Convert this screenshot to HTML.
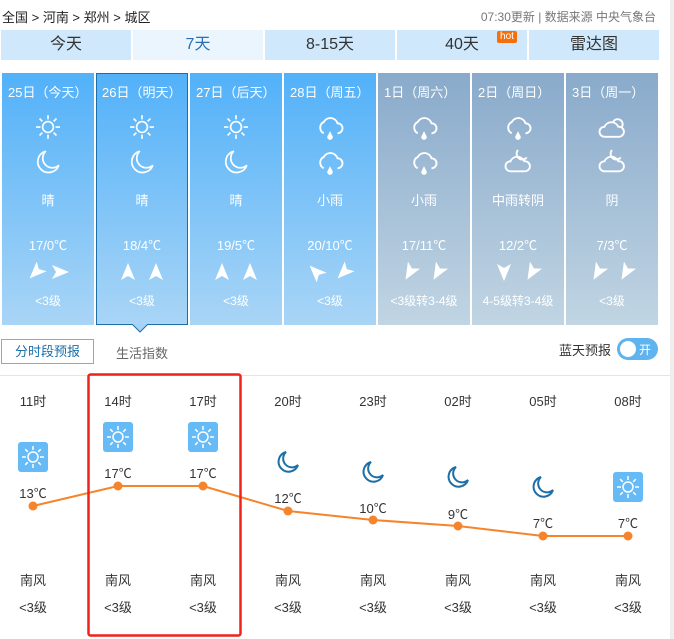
<!DOCTYPE html>
<html><head><meta charset="utf-8"><style>
*{margin:0;padding:0;box-sizing:border-box}
body{width:674px;height:639px;background:#fff;font-family:"Liberation Sans","Noto Sans CJK SC",sans-serif;position:relative;overflow:hidden;color:#333}
.a{position:absolute}
.tab{position:absolute;top:30px;height:30px;width:130px;background:#cfe8fc;font-size:16px;color:#333;text-align:center;line-height:30px}
.card{position:absolute;top:73px;height:252px;width:92px;color:#fff;text-align:center;background:linear-gradient(#52b1f9,#a9d5f6)}
.card.g{background:linear-gradient(#89aacb,#c1d5e3)}
.card .d{position:absolute;top:9px;left:6px;font-size:13px;text-align:left;white-space:nowrap}
.card svg{position:absolute;left:50%;transform:translateX(-50%)}
.card .t{position:absolute;width:100%;font-size:13px}
.c{position:absolute;text-align:center;width:60px;margin-left:-30px;font-size:13px;color:#333}
.sq{position:absolute;width:30px;height:30px;margin-left:-15px;background:#66bbf6;border-radius:3px}
</style></head><body>
<svg width="0" height="0" style="position:absolute">
<defs>
<g id="sun" fill="none" stroke="#fff" stroke-width="1.5"><circle cx="12" cy="12" r="5"/><path d="M12 1v4M12 19v4M1 12h4M19 12h4M4.2 4.2l2.6 2.6M17.2 17.2l2.6 2.6M4.2 19.8l2.6-2.6M17.2 6.8l2.6-2.6"/></g>
<g id="moon" fill="none" stroke="#fff" stroke-width="1.6"><path d="M10 2A10 10 0 1 0 22 15 8 8 0 0 1 10 2z"/></g>
<g id="rain" fill="none" stroke="#fff" stroke-width="1.5"><path d="M7 17a5 5 0 0 1 0-9 6 6 0 0 1 11 1 4 4 0 0 1 0 8"/><path d="M12 17l-1.5 3a1.5 1.5 0 0 0 3 0z" fill="#fff"/></g>
<g id="cloud" fill="none" stroke="#fff" stroke-width="1.5"><path d="M6 19a4 4 0 0 1 0-8 6 6 0 0 1 11 0 4 4 0 0 1 1 8z"/><path d="M13 7a4 4 0 0 1 7 4"/></g>
<g id="cm" fill="none" stroke="#fff" stroke-width="1.5"><path d="M6 21a4 4 0 0 1 0-8 6 6 0 0 1 11 0 4 4 0 0 1 1 8z"/><path d="M12 4a4 4 0 0 0 7 6 4 4 0 0 1-7-6z"/></g>
<g id="arr" fill="#fff"><path d="M0 -9L7 8 0 4-7 8z"/></g>
</defs></svg>

<div class="a" style="left:2px;top:7px;font-size:13px;color:#222">全国 &gt; 河南 &gt; 郑州 &gt; 城区</div>
<div class="a" style="right:18px;top:8px;font-size:12px;color:#777">07:30更新 | 数据来源 中央气象台</div>

<div class="tab" style="left:1px">今天</div>
<div class="tab" style="left:133px;background:#eaf5fe;color:#2a6fb6">7天</div>
<div class="tab" style="left:265px">8-15天</div>
<div class="tab" style="left:397px">40天</div>
<div class="a" style="left:497px;top:31px;width:20px;height:12px;background:#f56f0b;color:#fff;font-size:10px;line-height:12px;text-align:center;border-radius:2px">hot</div>
<div class="tab" style="left:529px">雷达图</div>

<div class="a" style="left:670px;top:0;width:4px;height:639px;background:#eee"></div>

<div class="card" style="left:2px"><div class="d">25日（今天）</div>
<svg width="26" height="26" viewBox="0 0 24 24" style="top:41px"><use href="#sun"/></svg>
<svg width="26" height="26" viewBox="0 0 24 24" style="top:76px"><use href="#moon"/></svg>
<div class="t" style="top:117px">晴</div><div class="t" style="top:162px">17/0℃</div>
<svg width="60" height="20" viewBox="0 0 60 20" style="top:189px"><use href="#arr" transform="translate(18 10) rotate(-135)"/><use href="#arr" transform="translate(42 10) rotate(90)"/></svg>
<div class="t" style="top:219px;font-size:12px">&lt;3级</div></div>

<div class="card" style="left:96px;border:1px solid #1b6fa8"><div class="d" style="left:5px;top:8px">26日（明天）</div>
<svg width="26" height="26" viewBox="0 0 24 24" style="top:40px"><use href="#sun"/></svg>
<svg width="26" height="26" viewBox="0 0 24 24" style="top:75px"><use href="#moon"/></svg>
<div class="t" style="top:116px">晴</div><div class="t" style="top:161px">18/4℃</div>
<svg width="60" height="20" viewBox="0 0 60 20" style="top:188px"><use href="#arr" transform="translate(16 10)"/><use href="#arr" transform="translate(44 10)"/></svg>
<div class="t" style="top:218px;font-size:12px">&lt;3级</div></div>
<svg class="a" style="left:132px;top:324px" width="16" height="9" viewBox="0 0 16 9"><path d="M0 0L8 8 16 0" fill="#a6d3f6" stroke="#1b6fa8"/></svg>

<div class="card" style="left:190px"><div class="d">27日（后天）</div>
<svg width="26" height="26" viewBox="0 0 24 24" style="top:41px"><use href="#sun"/></svg>
<svg width="26" height="26" viewBox="0 0 24 24" style="top:76px"><use href="#moon"/></svg>
<div class="t" style="top:117px">晴</div><div class="t" style="top:162px">19/5℃</div>
<svg width="60" height="20" viewBox="0 0 60 20" style="top:189px"><use href="#arr" transform="translate(16 10)"/><use href="#arr" transform="translate(44 10)"/></svg>
<div class="t" style="top:219px;font-size:12px">&lt;3级</div></div>

<div class="card" style="left:284px"><div class="d">28日（周五）</div>
<svg width="30" height="30" viewBox="0 0 24 24" style="top:39px"><use href="#rain"/></svg>
<svg width="30" height="30" viewBox="0 0 24 24" style="top:74px"><use href="#rain"/></svg>
<div class="t" style="top:117px">小雨</div><div class="t" style="top:162px">20/10℃</div>
<svg width="60" height="20" viewBox="0 0 60 20" style="top:189px"><use href="#arr" transform="translate(16 10) rotate(-45)"/><use href="#arr" transform="translate(44 10) rotate(-135)"/></svg>
<div class="t" style="top:219px;font-size:12px">&lt;3级</div></div>

<div class="card g" style="left:378px"><div class="d">1日（周六）</div>
<svg width="30" height="30" viewBox="0 0 24 24" style="top:39px"><use href="#rain"/></svg>
<svg width="30" height="30" viewBox="0 0 24 24" style="top:74px"><use href="#rain"/></svg>
<div class="t" style="top:117px">小雨</div><div class="t" style="top:162px">17/11℃</div>
<svg width="60" height="20" viewBox="0 0 60 20" style="top:189px"><use href="#arr" transform="translate(16 10) rotate(-150)"/><use href="#arr" transform="translate(44 10) rotate(-150)"/></svg>
<div class="t" style="top:219px;font-size:12px">&lt;3级转3-4级</div></div>

<div class="card g" style="left:472px"><div class="d">2日（周日）</div>
<svg width="30" height="30" viewBox="0 0 24 24" style="top:39px"><use href="#rain"/></svg>
<svg width="30" height="30" viewBox="0 0 24 24" style="top:72px"><use href="#cm"/></svg>
<div class="t" style="top:117px">中雨转阴</div><div class="t" style="top:162px">12/2℃</div>
<svg width="60" height="20" viewBox="0 0 60 20" style="top:189px"><use href="#arr" transform="translate(16 10) rotate(180)"/><use href="#arr" transform="translate(44 10) rotate(-150)"/></svg>
<div class="t" style="top:219px;font-size:12px">4-5级转3-4级</div></div>

<div class="card g" style="left:566px"><div class="d">3日（周一）</div>
<svg width="30" height="30" viewBox="0 0 24 24" style="top:40px"><use href="#cloud"/></svg>
<svg width="30" height="30" viewBox="0 0 24 24" style="top:72px"><use href="#cm"/></svg>
<div class="t" style="top:117px">阴</div><div class="t" style="top:162px">7/3℃</div>
<svg width="60" height="20" viewBox="0 0 60 20" style="top:189px"><use href="#arr" transform="translate(16 10) rotate(-150)"/><use href="#arr" transform="translate(44 10) rotate(-150)"/></svg>
<div class="t" style="top:219px;font-size:12px">&lt;3级</div></div>

<div class="a" style="left:1px;top:339px;width:93px;height:25px;border:1px solid #76b1d9;color:#1a6fa8;font-size:13px;text-align:center;line-height:23px">分时段预报</div>
<div class="a" style="left:116px;top:343px;font-size:13px;color:#666">生活指数</div>
<div class="a" style="left:559px;top:340px;font-size:13px;color:#333">蓝天预报</div>
<div class="a" style="left:617px;top:338px;width:41px;height:22px;border-radius:11px;background:#5fb3ee"><div class="a" style="left:3px;top:3px;width:16px;height:16px;border-radius:8px;background:#fff"></div><div class="a" style="left:22px;top:3px;color:#fff;font-size:12px">开</div></div>
<div class="a" style="left:0;top:375px;width:670px;height:1px;background:#e5e5e5"></div>

<svg class="a" style="left:0;top:0" width="670" height="639">
<polyline points="33,506 118,486 203,486 288,511 373,520 458,526 543,536 628,536" fill="none" stroke="#f5842b" stroke-width="2"/>
<g fill="#f5842b"><circle cx="33" cy="506" r="4.5"/><circle cx="118" cy="486" r="4.5"/><circle cx="203" cy="486" r="4.5"/><circle cx="288" cy="511" r="4.5"/><circle cx="373" cy="520" r="4.5"/><circle cx="458" cy="526" r="4.5"/><circle cx="543" cy="536" r="4.5"/><circle cx="628" cy="536" r="4.5"/></g>
<rect x="88.5" y="374.5" width="152" height="261" fill="none" stroke="#f0221b" stroke-width="2.5" rx="2"/>
<defs><g id="bm" fill="none" stroke="#1d6fa5" stroke-width="2"><path d="M10 2A10 10 0 1 0 22 15 8 8 0 0 1 10 2z"/></g></defs>
<use href="#bm" transform="translate(276 450)"/>
<use href="#bm" transform="translate(361 460)"/>
<use href="#bm" transform="translate(446 465)"/>
<use href="#bm" transform="translate(531 475)"/>
</svg>

<div class="sq" style="left:33px;top:442px"><svg width="30" height="30" viewBox="-3 -3 30 30"><use href="#sun"/></svg></div>
<div class="sq" style="left:118px;top:422px"><svg width="30" height="30" viewBox="-3 -3 30 30"><use href="#sun"/></svg></div>
<div class="sq" style="left:203px;top:422px"><svg width="30" height="30" viewBox="-3 -3 30 30"><use href="#sun"/></svg></div>
<div class="sq" style="left:628px;top:472px"><svg width="30" height="30" viewBox="-3 -3 30 30"><use href="#sun"/></svg></div>

<div class="c" style="left:33px;top:391px">11时</div><div class="c" style="left:118px;top:391px">14时</div><div class="c" style="left:203px;top:391px">17时</div><div class="c" style="left:288px;top:391px">20时</div><div class="c" style="left:373px;top:391px">23时</div><div class="c" style="left:458px;top:391px">02时</div><div class="c" style="left:543px;top:391px">05时</div><div class="c" style="left:628px;top:391px">08时</div>

<div class="c" style="left:33px;top:483px">13℃</div><div class="c" style="left:118px;top:463px">17℃</div><div class="c" style="left:203px;top:463px">17℃</div><div class="c" style="left:288px;top:488px">12℃</div><div class="c" style="left:373px;top:498px">10℃</div><div class="c" style="left:458px;top:504px">9℃</div><div class="c" style="left:543px;top:513px">7℃</div><div class="c" style="left:628px;top:513px">7℃</div>

<div class="c" style="left:33px;top:570px">南风</div><div class="c" style="left:118px;top:570px">南风</div><div class="c" style="left:203px;top:570px">南风</div><div class="c" style="left:288px;top:570px">南风</div><div class="c" style="left:373px;top:570px">南风</div><div class="c" style="left:458px;top:570px">南风</div><div class="c" style="left:543px;top:570px">南风</div><div class="c" style="left:628px;top:570px">南风</div>
<div class="c" style="left:33px;top:597px">&lt;3级</div><div class="c" style="left:118px;top:597px">&lt;3级</div><div class="c" style="left:203px;top:597px">&lt;3级</div><div class="c" style="left:288px;top:597px">&lt;3级</div><div class="c" style="left:373px;top:597px">&lt;3级</div><div class="c" style="left:458px;top:597px">&lt;3级</div><div class="c" style="left:543px;top:597px">&lt;3级</div><div class="c" style="left:628px;top:597px">&lt;3级</div>
</body></html>
